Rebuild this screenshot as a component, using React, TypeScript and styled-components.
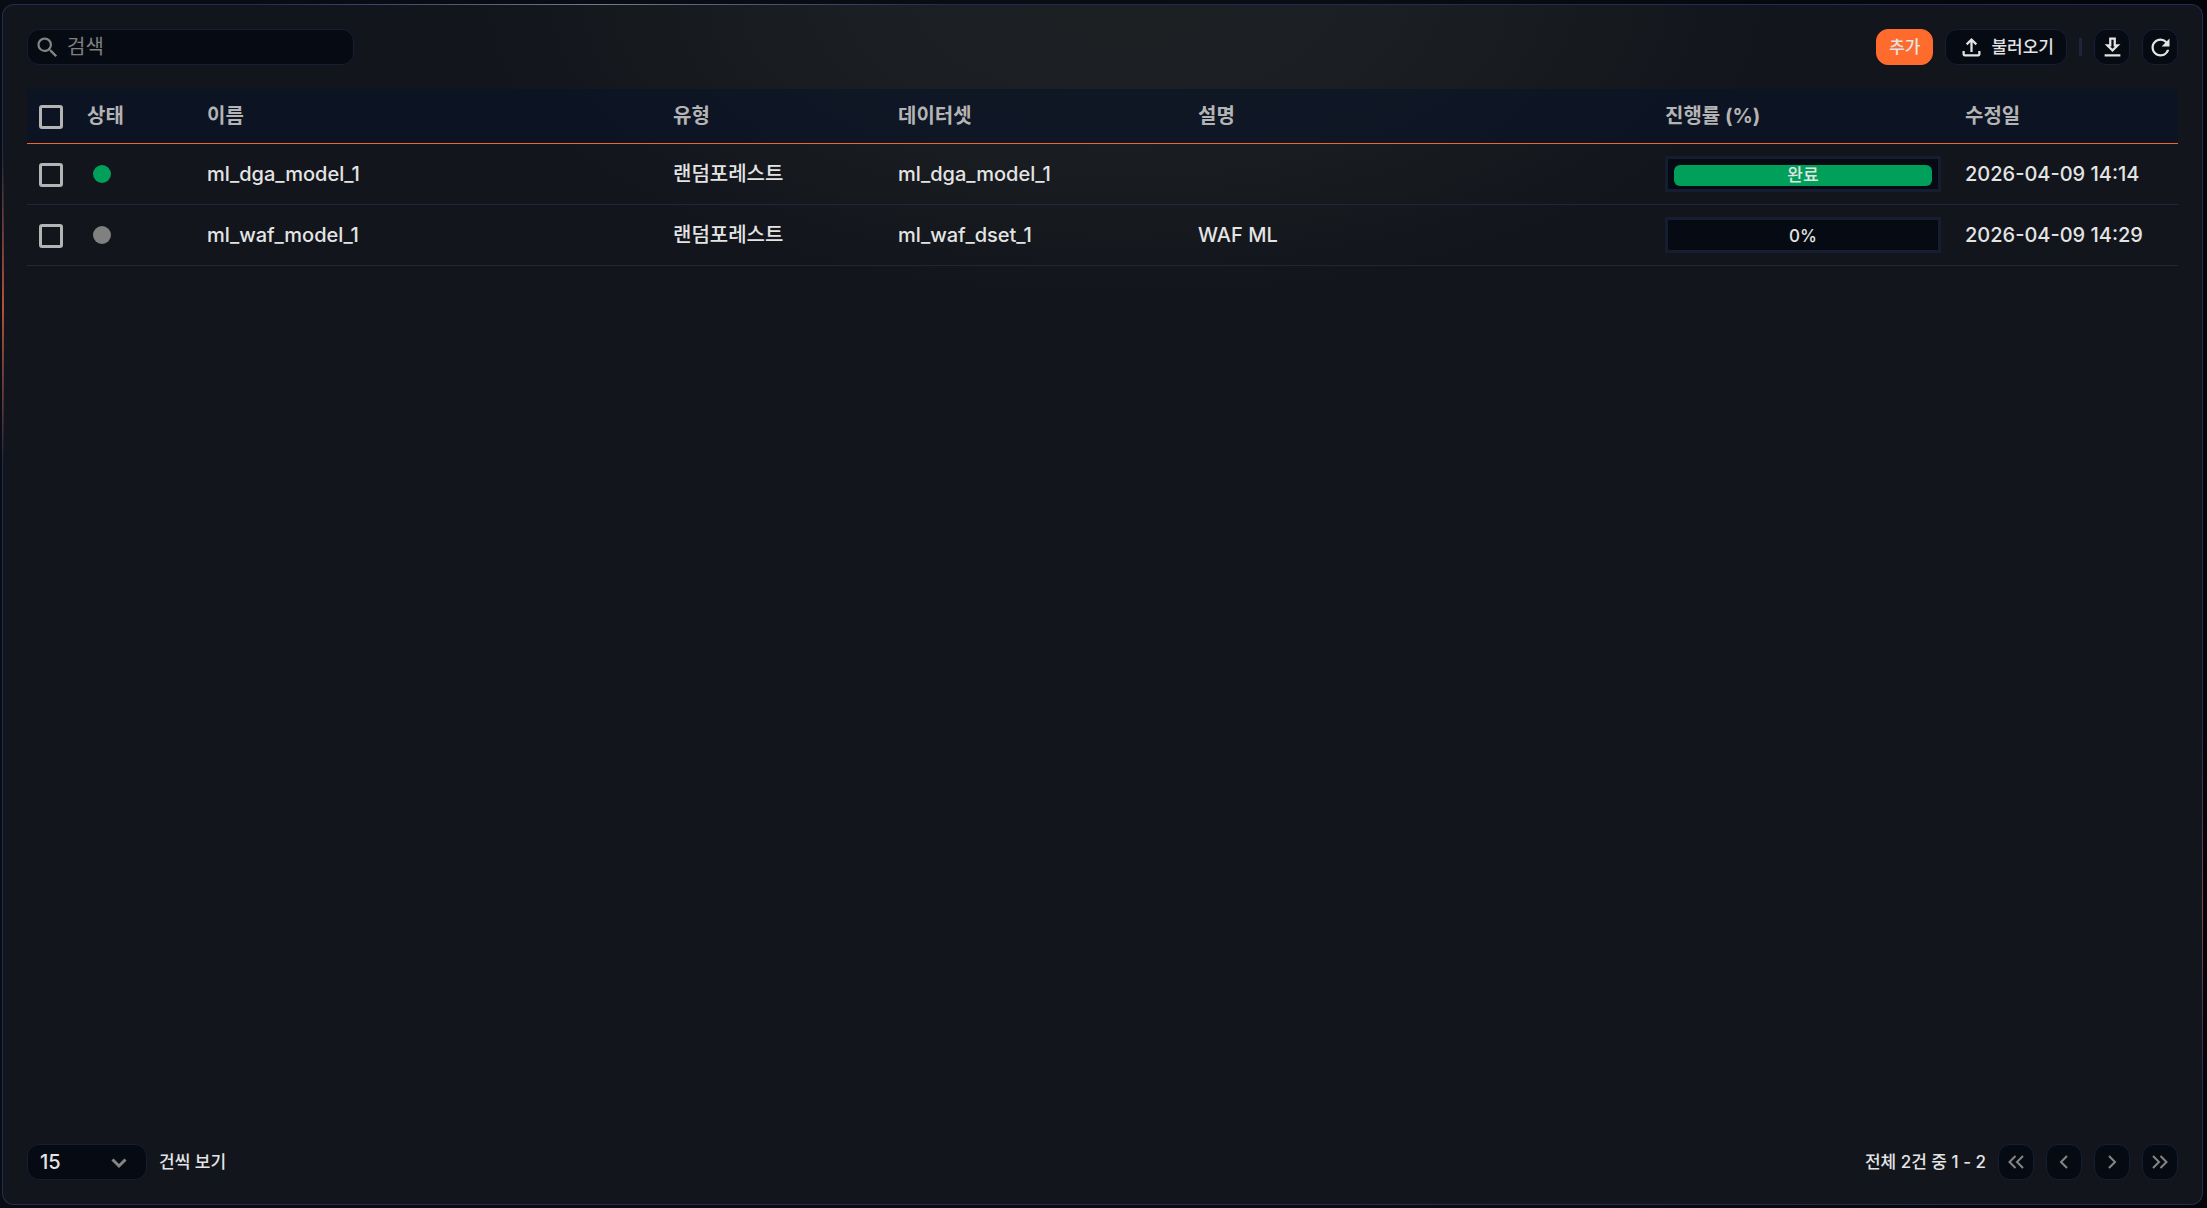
import React from "react";
import styled, { createGlobalStyle } from "styled-components";

const GlobalStyle = createGlobalStyle`
  *, *::before, *::after { box-sizing: border-box; }
  body { margin: 0; background: #05070d; }
  body, button, input, select {
    font-family: Inter, "Noto Sans CJK KR", sans-serif;
    font-weight: 500;
    color: #e4e4e4;
  }
`;

const Page = styled.div`
  min-height: 100vh;
  padding: 4px 4px 3px 2px;
  display: flex;
  background: linear-gradient(90deg, #0a0c13, #0a0c13 60%, #03050b);
`;

const Panel = styled.main`
  flex: 1;
  min-width: 0;
  display: flex;
  flex-direction: column;
  padding: 24px;
  border: 1px solid transparent;
  border-radius: 12px;
  background:
    linear-gradient(transparent, #b0543a, transparent) 0 17% / 2px 25% no-repeat border-box,
    radial-gradient(ellipse 640px 290px at 51% 0, #1d2023 0%, #1b1e22 40%, #171a1e 68%, rgba(18, 21, 28, 0) 100%) padding-box,
    linear-gradient(#12151c, #12151c) padding-box,
    linear-gradient(90deg, transparent, #747a90, transparent) 17% 0 / 31% 1px no-repeat border-box,
    linear-gradient(transparent, #80494a, transparent) 100% 86% / 1px 30% no-repeat border-box,
    linear-gradient(#232c52, #232c52) border-box;
`;

const Bar = styled.div`
  display: flex;
  align-items: center;
  justify-content: space-between;
  height: 36px;
`;

const Group = styled.div`
  display: flex;
  align-items: center;
  gap: 12px;
`;

const well = `
  background: #060a12;
  border: 1px solid #171e34;
  border-radius: 12px;
`;

const SearchBox = styled.label`
  ${well}
  display: flex;
  align-items: center;
  gap: 6px;
  width: 327px;
  height: 36px;
  padding: 0 6px;
  color: #858585;
`;

const SearchInput = styled.input`
  flex: 1;
  min-width: 0;
  padding: 0;
  border: 0;
  outline: 0;
  background: none;
  font-size: 20px;
  font-weight: 400;
  line-height: 24px;
  &::placeholder { color: #808080; opacity: 1; }
`;

const Button = styled.button<{ $primary?: boolean }>`
  ${well}
  display: flex;
  align-items: center;
  justify-content: center;
  gap: 6px;
  height: 36px;
  padding: 0 12px;
  font-size: 17px;
  line-height: 24px;
  white-space: nowrap;
  ${(p) => p.$primary && "background: #ff6b2c; border-color: #ff6b2c;"}
`;

const IconButton = styled.button<{ $muted?: boolean }>`
  ${well}
  display: grid;
  place-items: center;
  width: 36px;
  height: 36px;
  padding: 0;
  color: ${(p) => (p.$muted ? "#858585" : "#e4e4e4")};
`;

const Divider = styled.span`
  width: 3px;
  height: 18px;
  background: #1f243a;
`;

const TableArea = styled.div`
  flex: 1;
  margin-top: 24px;
`;

const Table = styled.table`
  width: 100%;
  table-layout: fixed;
  border-collapse: separate;
  border-spacing: 0;
  font-size: 20px;
  line-height: 24px;
`;

const Col = styled.col<{ $w?: number }>`
  width: ${(p) => (p.$w ? `${p.$w}px` : "auto")};
`;

const Th = styled.th`
  height: 55px;
  padding: 0 12px;
  border-bottom: 1px solid #f0662e;
  background: rgba(9, 18, 40, 0.6);
  color: #b4b4b4;
  font-weight: 700;
  text-align: left;
  white-space: nowrap;
`;

const Td = styled.td`
  height: 61px;
  padding: 0 12px;
  border-bottom: 1px solid #222638;
  white-space: nowrap;
`;

const Check = styled.input.attrs({ type: "checkbox" })`
  appearance: none;
  display: block;
  width: 24px;
  height: 24px;
  margin: 2px 0 0;
  border: 3px solid #b4b4b4;
  border-radius: 3px;
  &:checked { background: #ff6b2c; }
`;

const Dot = styled.span<{ $color: string }>`
  display: block;
  width: 18px;
  height: 18px;
  margin-left: 6px;
  border-radius: 50%;
  background: ${(p) => p.$color};
`;

const Track = styled.div`
  height: 36px;
  padding: 6px 6px 3px;
  border: 3px solid #161d31;
  background: #060a12;
`;

const Fill = styled.div<{ $done: boolean }>`
  height: 21px;
  border-radius: 6px;
  background: ${(p) => (p.$done ? "#00a05a" : "transparent")};
  font-size: 17px;
  line-height: 20px;
  text-align: center;
`;

const SelectBox = styled.div`
  ${well}
  position: relative;
  width: 120px;
  height: 36px;
`;

const Select = styled.select`
  appearance: none;
  width: 100%;
  height: 100%;
  padding: 0 12px;
  border: 0;
  outline: 0;
  background: none;
  font-size: 20px;
`;

const Chevron = styled.svg`
  position: absolute;
  right: 19px;
  top: 12px;
  pointer-events: none;
`;

const Note = styled.label`
  font-size: 17px;
  line-height: 24px;
`;

const Stroke = ({ d }: { d: string }) => (
  <svg width="24" height="24" viewBox="0 0 24 24" fill="none" stroke="currentColor" strokeWidth="2" aria-hidden="true">
    <path d={d} />
  </svg>
);

const Glyph = ({ d }: { d: string }) => (
  <svg width="27" height="27" viewBox="0 0 24 24" fill="currentColor" aria-hidden="true">
    <path d={d} />
  </svg>
);

const SEARCH =
  "M15.5 14h-.79l-.28-.27A6.471 6.471 0 0 0 16 9.5 6.5 6.5 0 1 0 9.5 16c1.61 0 3.09-.59 4.23-1.57l.27.28v.79l5 4.99L20.49 19l-4.99-5zm-6 0C7.01 14 5 11.99 5 9.5S7.01 5 9.5 5 14 7.01 14 9.5 11.99 14 9.5 14z";
const DOWNLOAD =
  "M19 9h-4V3H9v6H5l7 7 7-7zm-8 2V5h2v6h1.17L12 13.17 9.83 11H11zm-6 7h14v2H5z";
const REFRESH =
  "M17.65 6.35A7.958 7.958 0 0 0 12 4c-4.42 0-7.99 3.58-7.99 8s3.57 8 7.99 8c3.73 0 6.84-2.55 7.73-6h-2.08A5.99 5.99 0 0 1 12 18c-3.31 0-6-2.69-6-6s2.69-6 6-6c1.66 0 3.14.69 4.22 1.78L13 11h7V4l-2.35 2.35z";
const UPLOAD =
  "M11 16V7.35l-2.6 2.6L7 8.5l5-5 5 5-1.4 1.45-2.6-2.6V16zm-5 4q-.825 0-1.412-.587T4 18v-3h2v3h12v-3h2v3q0 .825-.587 1.413T18 20z";

const columns: { label: string; width?: number }[] = [
  { label: "상태", width: 120 },
  { label: "이름" },
  { label: "유형", width: 225 },
  { label: "데이터셋", width: 300 },
  { label: "설명", width: 467 },
  { label: "진행률 (%)", width: 300 },
  { label: "수정일", width: 225 },
];

const models = [
  { name: "ml_dga_model_1", type: "랜덤포레스트", dataset: "ml_dga_model_1", note: "", done: true, date: "2026-04-09 14:14" },
  { name: "ml_waf_model_1", type: "랜덤포레스트", dataset: "ml_waf_dset_1", note: "WAF ML", done: false, date: "2026-04-09 14:29" },
];

const pager = [
  { label: "처음", d: "M11.5 6l-6 6 6 6M19 6l-6 6 6 6" },
  { label: "이전", d: "M15 6l-6 6 6 6" },
  { label: "다음", d: "M9 6l6 6-6 6" },
  { label: "마지막", d: "M5 6l6 6-6 6M12.5 6l6 6-6 6" },
];

export default function App() {
  return (
    <>
      <GlobalStyle />
      <Page>
        <Panel>
          <Bar>
            <SearchBox>
              <Glyph d={SEARCH} />
              <SearchInput type="text" placeholder="검색" aria-label="검색" />
            </SearchBox>
            <Group>
              <Button $primary>추가</Button>
              <Button>
                <Glyph d={UPLOAD} />
                불러오기
              </Button>
              <Divider />
              <IconButton aria-label="다운로드"><Glyph d={DOWNLOAD} /></IconButton>
              <IconButton aria-label="새로고침"><Glyph d={REFRESH} /></IconButton>
            </Group>
          </Bar>

          <TableArea>
            <Table>
              <colgroup>
                <Col $w={48} />
                {columns.map((c) => <Col key={c.label} $w={c.width} />)}
              </colgroup>
              <thead>
                <tr>
                  <Th><Check aria-label="전체 선택" /></Th>
                  {columns.map((c) => <Th key={c.label}>{c.label}</Th>)}
                </tr>
              </thead>
              <tbody>
                {models.map((m) => (
                  <tr key={m.name}>
                    <Td><Check aria-label={m.name} /></Td>
                    <Td><Dot $color={m.done ? "#00a05a" : "#808080"} /></Td>
                    <Td>{m.name}</Td>
                    <Td>{m.type}</Td>
                    <Td>{m.dataset}</Td>
                    <Td>{m.note}</Td>
                    <Td><Track><Fill $done={m.done}>{m.done ? "완료" : "0%"}</Fill></Track></Td>
                    <Td>{m.date}</Td>
                  </tr>
                ))}
              </tbody>
            </Table>
          </TableArea>

          <Bar>
            <Group>
              <SelectBox>
                <Select id="page-size" defaultValue="15">
                  <option>15</option>
                  <option>30</option>
                  <option>50</option>
                </Select>
                <Chevron width="16" height="12" viewBox="0 0 16 12" fill="none" stroke="#858585" strokeWidth="3" aria-hidden="true">
                  <path d="M1.5 2.5l6.5 6.5 6.5-6.5" />
                </Chevron>
              </SelectBox>
              <Note htmlFor="page-size">건씩 보기</Note>
            </Group>
            <Group>
              <Note as="span">전체 2건 중 1 - 2</Note>
              {pager.map((p) => (
                <IconButton key={p.label} $muted aria-label={p.label}><Stroke d={p.d} /></IconButton>
              ))}
            </Group>
          </Bar>
        </Panel>
      </Page>
    </>
  );
}
